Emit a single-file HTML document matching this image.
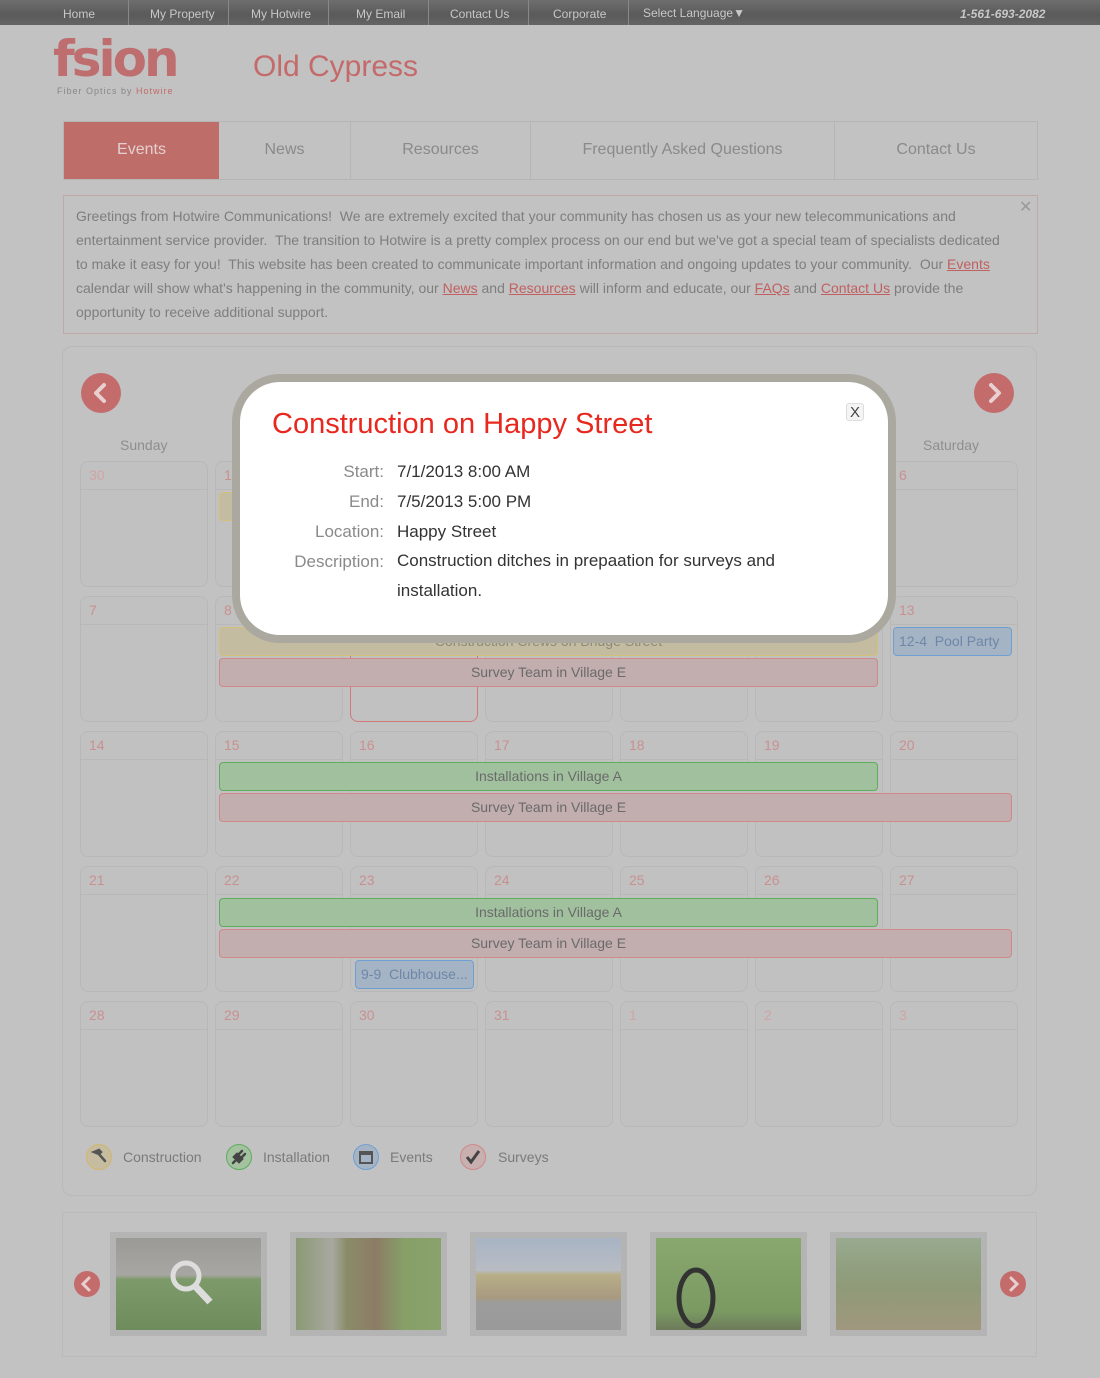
<!DOCTYPE html>
<html><head><meta charset="utf-8">
<style>
*{margin:0;padding:0;box-sizing:border-box}
body{width:1100px;height:1378px;background:#c2c2c2;font-family:"Liberation Sans",Arial,sans-serif;position:relative;overflow:hidden;color:#7a7a7a}
.a{position:absolute}
.top{left:0;top:0;width:1100px;height:25px;background:linear-gradient(#6e6e6e,#5a5a5a 60%,#646464)}
.top span{position:absolute;top:7px;font-size:12px;color:#c8c8c8}
.top i{position:absolute;top:0;width:1px;height:25px;background:#888}
.nav{left:63px;top:121px;width:975px;height:59px;border:1px solid #b5b5b5;background:#c2c2c2}
.nav div{position:absolute;top:0;height:57px;line-height:56px;text-align:center;font-size:16px;color:#8a8a8a;border-right:1px solid #b5b5b5}
.msg{left:63px;top:195px;width:975px;height:139px;border:1px solid #c0a8a8;padding:8px 30px 10px 12px;font-size:14px;line-height:24px;color:#7e7e7e}
.msg u{color:#c06060;text-decoration:underline}
.panel{left:62px;top:346px;width:975px;height:850px;border:1px solid #b9b9b9;border-radius:10px}
.cell{position:absolute;width:128px;height:126px;border:1px solid #b8b8b8;border-radius:8px;background:#c1c1c1}
.cell b{position:absolute;left:0;right:0;top:27px;border-top:1px solid #b8b8b8}
.cell span{position:absolute;left:8px;top:5px;font-size:14px;color:#c99090;font-weight:normal}
.ev{position:absolute;height:29px;border-radius:4px;text-align:center;line-height:27px;font-size:14px;color:#6a6a6a;font-family:"Liberation Sans Narrow","Liberation Sans",sans-serif}
.y{background:#c4bca0;border:1px solid #d2bf7a}
.r{background:#c2aeae;border:1px solid #d08888}
.g{background:#a1c19e;border:1px solid #5cae5c}
.b{background:#a4b4c4;border:1px solid #6f9fd2;color:#6e86a8;text-align:left;padding-left:5px}
.arr{border-radius:50%;background:#c46c6c}
.leg{position:absolute;top:1144px;width:26px;height:26px;border-radius:50%}
.legt{position:absolute;top:1149px;font-size:14px;color:#7a7a7a}
.gal{left:62px;top:1212px;width:975px;height:145px;border:1px solid #b9b9b9}
.ph{position:absolute;top:1232px;width:157px;height:104px;background:#b4b4b4}
.ph div{position:absolute;left:6px;top:6px;width:145px;height:92px}
.modal{left:232px;top:374px;width:664px;height:269px;border-radius:48px;background:#aaa89f}
.mi{left:240px;top:382px;width:648px;height:253px;border-radius:40px;background:#fff}
.lab{position:absolute;font-size:17px;color:#8a8a8a;text-align:right;width:150px;left:234px}
.val{position:absolute;font-size:17px;color:#333;left:397px}
</style></head><body>
<div class="a top">
<span style="left:63px">Home</span><i style="left:128px"></i>
<span style="left:150px">My Property</span><i style="left:228px"></i>
<span style="left:251px">My Hotwire</span><i style="left:328px"></i>
<span style="left:356px">My Email</span><i style="left:428px"></i>
<span style="left:450px">Contact Us</span><i style="left:528px"></i>
<span style="left:553px">Corporate</span><i style="left:628px"></i>
<span style="left:643px;top:6px">Select Language▼</span>
<span style="left:960px;font-weight:bold;font-style:italic">1-561-693-2082</span>
</div>
<div class="a" style="left:53px;top:33px;font-size:50px;font-weight:bold;color:#bf6e70;letter-spacing:-3px;font-family:'DejaVu Sans',sans-serif;line-height:52px">fsion</div>
<div class="a" style="left:57px;top:86px;font-size:9px;letter-spacing:1px;color:#888">Fiber Optics by <span style="color:#c46a6a">Hotwire</span></div>
<div class="a" style="left:253px;top:50px;font-size:30px;color:#c46a6a">Old Cypress</div>
<div class="a nav">
<div style="left:0;width:155px;background:#bf6d69;color:#e2d0cf;border-right:none">Events</div>
<div style="left:155px;width:132px">News</div>
<div style="left:287px;width:180px">Resources</div>
<div style="left:467px;width:304px">Frequently Asked Questions</div>
<div style="left:771px;width:202px;border-right:none">Contact Us</div>
</div>
<div class="a msg">Greetings from Hotwire Communications!&nbsp; We are extremely excited that your community has chosen us as your new telecommunications and entertainment service provider.&nbsp; The transition to Hotwire is a pretty complex process on our end but we've got a special team of specialists dedicated to make it easy for you!&nbsp; This website has been created to communicate important information and ongoing updates to your community.&nbsp; Our <u>Events</u> calendar will show what's happening in the community, our <u>News</u> and <u>Resources</u> will inform and educate, our <u>FAQs</u> and <u>Contact Us</u> provide the opportunity to receive additional support.</div>
<div class="a" style="left:1019px;top:197px;font-size:16px;color:#999">✕</div>
<div class="a panel"></div>
<div class="a arr" style="left:81px;top:373px;width:40px;height:40px"><svg width="40" height="40"><path d="M23 12 L15 20 L23 28" stroke="#e8d0d0" stroke-width="4" fill="none" stroke-linecap="round" stroke-linejoin="round"/></svg></div>
<div class="a arr" style="left:974px;top:373px;width:40px;height:40px"><svg width="40" height="40"><path d="M17 12 L25 20 L17 28" stroke="#e8d0d0" stroke-width="4" fill="none" stroke-linecap="round" stroke-linejoin="round"/></svg></div>
<div class="a" style="left:120px;top:437px;font-size:14px;color:#8e8e8e">Sunday</div>
<div class="a" style="left:923px;top:437px;font-size:14px;color:#8e8e8e">Saturday</div>

<div class="cell" style="left:80px;top:461px"><b></b><span style="color:#d0a4a4">30</span></div>
<div class="cell" style="left:215px;top:461px"><b></b><span>1</span></div>
<div class="cell" style="left:350px;top:461px"><b></b><span>2</span></div>
<div class="cell" style="left:485px;top:461px"><b></b><span>3</span></div>
<div class="cell" style="left:620px;top:461px"><b></b><span>4</span></div>
<div class="cell" style="left:755px;top:461px"><b></b><span>5</span></div>
<div class="cell" style="left:890px;top:461px"><b></b><span>6</span></div>
<div class="cell" style="left:80px;top:596px"><b></b><span>7</span></div>
<div class="cell" style="left:215px;top:596px"><b></b><span>8</span></div>
<div class="cell" style="left:350px;top:596px;border-color:#d07a7a"><b></b><span>9</span></div>
<div class="cell" style="left:485px;top:596px"><b></b><span>10</span></div>
<div class="cell" style="left:620px;top:596px"><b></b><span>11</span></div>
<div class="cell" style="left:755px;top:596px"><b></b><span>12</span></div>
<div class="cell" style="left:890px;top:596px"><b></b><span>13</span></div>
<div class="cell" style="left:80px;top:731px"><b></b><span>14</span></div>
<div class="cell" style="left:215px;top:731px"><b></b><span>15</span></div>
<div class="cell" style="left:350px;top:731px"><b></b><span>16</span></div>
<div class="cell" style="left:485px;top:731px"><b></b><span>17</span></div>
<div class="cell" style="left:620px;top:731px"><b></b><span>18</span></div>
<div class="cell" style="left:755px;top:731px"><b></b><span>19</span></div>
<div class="cell" style="left:890px;top:731px"><b></b><span>20</span></div>
<div class="cell" style="left:80px;top:866px"><b></b><span>21</span></div>
<div class="cell" style="left:215px;top:866px"><b></b><span>22</span></div>
<div class="cell" style="left:350px;top:866px"><b></b><span>23</span></div>
<div class="cell" style="left:485px;top:866px"><b></b><span>24</span></div>
<div class="cell" style="left:620px;top:866px"><b></b><span>25</span></div>
<div class="cell" style="left:755px;top:866px"><b></b><span>26</span></div>
<div class="cell" style="left:890px;top:866px"><b></b><span>27</span></div>
<div class="cell" style="left:80px;top:1001px"><b></b><span>28</span></div>
<div class="cell" style="left:215px;top:1001px"><b></b><span>29</span></div>
<div class="cell" style="left:350px;top:1001px"><b></b><span>30</span></div>
<div class="cell" style="left:485px;top:1001px"><b></b><span>31</span></div>
<div class="cell" style="left:620px;top:1001px"><b></b><span style="color:#d0a4a4">1</span></div>
<div class="cell" style="left:755px;top:1001px"><b></b><span style="color:#d0a4a4">2</span></div>
<div class="cell" style="left:890px;top:1001px"><b></b><span style="color:#d0a4a4">3</span></div>

<div class="ev y" style="left:219px;top:492px;width:659px"></div>
<div class="ev y" style="left:219px;top:627px;width:659px;color:#8e8a7c">Construction Crews on Bridge Street</div>
<div class="ev r" style="left:219px;top:658px;width:659px">Survey Team in Village E</div>
<div class="ev b" style="left:893px;top:627px;width:119px">12-4&nbsp; Pool Party</div>
<div class="ev g" style="left:219px;top:762px;width:659px">Installations in Village A</div>
<div class="ev r" style="left:219px;top:793px;width:793px;padding-right:134px">Survey Team in Village E</div>
<div class="ev g" style="left:219px;top:898px;width:659px">Installations in Village A</div>
<div class="ev r" style="left:219px;top:929px;width:793px;padding-right:134px">Survey Team in Village E</div>
<div class="ev b" style="left:355px;top:960px;width:119px">9-9&nbsp; Clubhouse...</div>

<div class="leg" style="left:86px;background:#c6bca0;border:1px solid #d4b66a"><svg width="24" height="24"><path d="M7 7 L12 5 L14 7 L12 9 Z M11 8 L18 16" stroke="#555" stroke-width="2.5" fill="#555" stroke-linecap="round"/></svg></div>
<div class="legt" style="left:123px">Construction</div>
<div class="leg" style="left:226px;background:#a4c2a0;border:1px solid #5cae5c"><svg width="24" height="24"><path d="M6 18 L10 14 M10 9 L15 14 L12 17 L7 12 Z M12 9 L15 6 M15 12 L18 9" stroke="#444" stroke-width="2.5" fill="#444" stroke-linecap="round"/></svg></div>
<div class="legt" style="left:263px">Installation</div>
<div class="leg" style="left:353px;background:#a4b4c4;border:1px solid #6f9fd2"><svg width="24" height="24"><rect x="6" y="7" width="12" height="11" fill="none" stroke="#555" stroke-width="2"/><rect x="6" y="7" width="12" height="3" fill="#555"/></svg></div>
<div class="legt" style="left:390px">Events</div>
<div class="leg" style="left:460px;background:#c8b0b0;border:1px solid #d08888"><svg width="24" height="24"><path d="M6 12 L10 17 L18 6" stroke="#444" stroke-width="3" fill="none"/></svg></div>
<div class="legt" style="left:498px">Surveys</div>

<div class="a gal"></div>
<div class="a arr" style="left:74px;top:1271px;width:26px;height:26px"><svg width="26" height="26"><path d="M15 7 L9 13 L15 19" stroke="#e8d0d0" stroke-width="3" fill="none" stroke-linecap="round"/></svg></div>
<div class="a arr" style="left:1000px;top:1271px;width:26px;height:26px"><svg width="26" height="26"><path d="M11 7 L17 13 L11 19" stroke="#e8d0d0" stroke-width="3" fill="none" stroke-linecap="round"/></svg></div>
<div class="ph" style="left:110px"><div style="background:linear-gradient(#9c9a96 0,#a8a6a2 40%,#7d9a6a 45%,#6f8c5c 100%)"><svg width="145" height="92"><circle cx="70" cy="38" r="13" fill="none" stroke="#ddd" stroke-width="5"/><path d="M79 48 L94 64" stroke="#ddd" stroke-width="7"/></svg></div></div>
<div class="ph" style="left:290px"><div style="background:linear-gradient(90deg,#8a9a74 0,#a8a8a0 25%,#8a8c68 35%,#8c7c66 55%,#86a068 75%,#8aa26c 100%)"></div></div>
<div class="ph" style="left:470px"><div style="background:linear-gradient(#a8b4c4 0,#b8bcc4 35%,#b8ae88 40%,#a89a80 65%,#9c9c9c 70%,#9a9a9a 100%)"></div></div>
<div class="ph" style="left:650px"><div style="background:linear-gradient(#88a870,#7a9a62 80%,#6e7a5a)"><svg width="145" height="92"><ellipse cx="40" cy="60" rx="17" ry="28" fill="none" stroke="#333" stroke-width="5"/></svg></div></div>
<div class="ph" style="left:830px"><div style="background:linear-gradient(#9aaa90 0,#90a080 30%,#909a78 55%,#a0987e 100%)"></div></div>

<div class="a" style="left:470px;top:374px;font-size:30px;color:#c6a0a0">July 2013</div>
<div class="a modal"></div>
<div class="a mi"></div>
<div class="a" style="left:272px;top:408px;font-size:29px;color:#e8281e">Construction on Happy Street</div>
<div class="a" style="left:846px;top:403px;width:18px;height:18px;border:1px solid #ddd;border-radius:3px;background:#f4f4f4;font-size:15px;color:#444;text-align:center;line-height:17px">X</div>
<div class="lab" style="top:462px">Start:</div><div class="val" style="top:462px">7/1/2013 8:00 AM</div>
<div class="lab" style="top:492px">End:</div><div class="val" style="top:492px">7/5/2013 5:00 PM</div>
<div class="lab" style="top:522px">Location:</div><div class="val" style="top:522px">Happy Street</div>
<div class="lab" style="top:552px">Description:</div><div class="val" style="top:552px;width:440px;line-height:30px;margin-top:-6px">Construction ditches in prepaation for surveys and installation.</div>
</body></html>
